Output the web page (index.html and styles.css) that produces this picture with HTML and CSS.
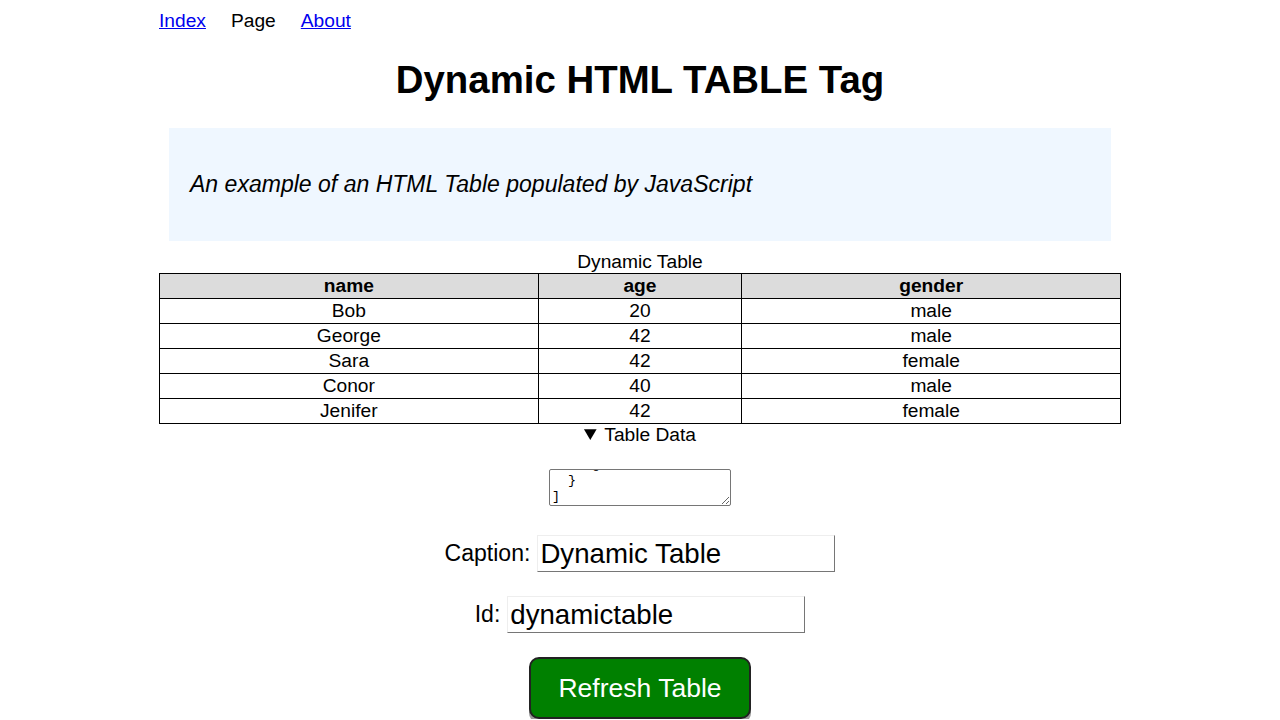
FILE: index.html
```html
<!DOCTYPE html>
<html lang="en">
<head>
<meta charset="utf-8">
<title>Dynamic HTML TABLE Tag</title>
<link rel="stylesheet" href="styles.css">
</head>
<body>
<div class="page">
  <nav class="nav">
    <a href="#">Index</a>
    <span>Page</span>
    <a href="#">About</a>
  </nav>
  <h1 class="title">Dynamic HTML TABLE Tag</h1>
  <div class="intro">
    <p>An example of an HTML Table populated by JavaScript</p>
  </div>
  <table class="data" id="dynamictable">
    <caption>Dynamic Table</caption>
    <thead>
      <tr><th class="c-name">name</th><th class="c-age">age</th><th class="c-gender">gender</th></tr>
    </thead>
    <tbody>
      <tr><td>Bob</td><td>20</td><td>male</td></tr>
      <tr><td>George</td><td>42</td><td>male</td></tr>
      <tr><td>Sara</td><td>42</td><td>female</td></tr>
      <tr><td>Conor</td><td>40</td><td>male</td></tr>
      <tr><td>Jenifer</td><td>42</td><td>female</td></tr>
    </tbody>
  </table>
  <details class="json" open>
    <summary>Table Data</summary>
    <textarea class="json-text" id="jsondata">[
  {
    "name": "Bob",
    "age": 20,
    "gender": "male"
  },
  {
    "name": "George",
    "age": 42,
    "gender": "male"
  },
  {
    "name": "Sara",
    "age": 42,
    "gender": "female"
  },
  {
    "name": "Conor",
    "age": 40,
    "gender": "male"
  },
  {
    "name": "Jenifer",
    "age": 42,
    "gender": "female"
  }
]</textarea>
  </details>
  <div class="form">
    <div class="row">
      <label for="caption">Caption:</label>
      <input class="field" id="caption" type="text" value="Dynamic Table">
    </div>
    <div class="row">
      <label for="tableid">Id:</label>
      <input class="field" id="tableid" type="text" value="dynamictable">
    </div>
    <div class="row">
      <button class="refresh" type="button">Refresh Table</button>
    </div>
  </div>
</div>
<script src="script.js"></script>
</body>
</html>
```

FILE: styles.css
```css
html, body {
  margin: 0;
  padding: 0;
  background: #fff;
}
body {
  font-family: "Liberation Sans", Arial, sans-serif;
  font-size: 19.2px;
  color: #000;
}
.page {
  width: 962px;
  margin: 0 auto;
}
.nav {
  display: flex;
  gap: 25px;
  padding-top: 10px;
  line-height: 22px;
}
.nav a {
  color: #0000ee;
  text-decoration: underline;
}
.title {
  font-size: 38.4px;
  font-weight: bold;
  text-align: center;
  margin: 26px 0 26px;
  line-height: 44px;
}
.intro {
  background: #eff7ff;
  margin: 0 10px 10px;
  padding: 20px 21px;
}
.intro p {
  margin: 23px 0;
  font-size: 23.04px;
  font-style: italic;
  line-height: 27px;
}
.data {
  width: 100%;
  border-collapse: collapse;
}
.data caption {
  line-height: 22px;
}
.data th, .data td {
  border: 1px solid #000;
  padding: 1px;
  text-align: center;
  line-height: 22px;
}
.data th {
  background: #dcdcdc;
  font-weight: bold;
}
.c-name { width: 39.4%; }
.c-age { width: 21.2%; }
.c-gender { width: 39.4%; }
.json summary {
  text-align: center;
  line-height: 22px;
  cursor: pointer;
}
.json-text {
  display: block;
  box-sizing: border-box;
  width: 182px;
  height: 37px;
  margin: 23px auto 0;
  font-family: "Liberation Mono", monospace;
  font-size: 13.33px;
  line-height: 16px;
  padding: 2px 2px 0;
  border: 1px solid #767676;
  border-radius: 2px;
  overflow: hidden;
  white-space: pre;
  color: #000;
}
.form {
  display: flex;
  flex-direction: column;
  gap: 24px;
  margin-top: 29px;
}
.row {
  display: flex;
  justify-content: center;
  align-items: center;
  gap: 7px;
}
.row label {
  font-size: 23.04px;
}
.field {
  box-sizing: border-box;
  width: 298px;
  height: 37px;
  padding: 1px 2px;
  font-family: "Liberation Sans", Arial, sans-serif;
  font-size: 27.65px;
  border-style: solid;
  border-width: 1px;
  border-color: #eeeeee #767676 #767676 #eeeeee;
  border-radius: 0;
  color: #000;
  background: #fff;
}
.refresh {
  box-sizing: border-box;
  width: 222px;
  height: 62px;
  padding: 0;
  background: #008000;
  color: #fff;
  font-family: "Liberation Sans", Arial, sans-serif;
  font-size: 26.5px;
  border: 2px solid #222;
  border-radius: 10px;
  box-shadow: 0 4px 0 #999;
  cursor: pointer;
}
```

FILE: script.js
```js
var t = document.getElementById('jsondata');
if (t) { t.scrollTop = t.scrollHeight; }
```
